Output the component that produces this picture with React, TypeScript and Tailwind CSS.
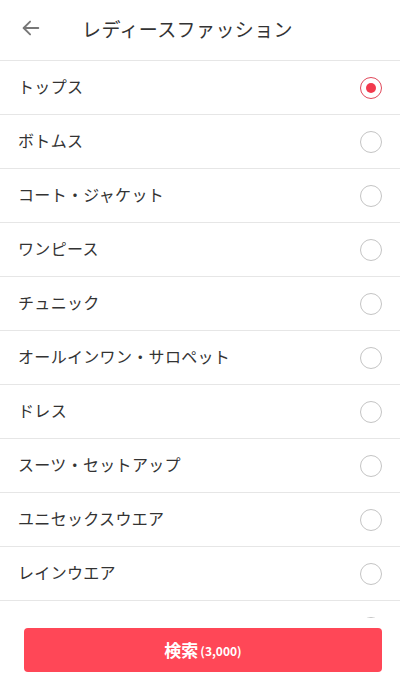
import React from "react";

const categories = [
  "トップス",
  "ボトムス",
  "コート・ジャケット",
  "ワンピース",
  "チュニック",
  "オールインワン・サロペット",
  "ドレス",
  "スーツ・セットアップ",
  "ユニセックスウエア",
  "レインウエア",
  "ルームウエア",
];

const Radio = ({ checked }: { checked: boolean }) =>
  checked ? (
    <span className="w-[22px] h-[22px] rounded-full border-[1.5px] border-[#e0485a] flex items-center justify-center">
      <span className="w-[10px] h-[10px] rounded-full bg-[#f23a4d]" />
    </span>
  ) : (
    <span className="w-[22px] h-[22px] rounded-full border-[1.5px] border-[#c4c4c4]" />
  );

export default function App() {
  const selected = 0;
  return (
    <div
      className="relative h-[682px] w-[400px] overflow-hidden bg-white text-[#333]"
      style={{ fontFamily: '"Noto Sans CJK JP", "Noto Sans", sans-serif' }}
    >
      <div className="h-[61px] pb-[4px] flex items-center border-b border-[#e6e6e6]">
        <button className="w-[62px] h-full flex items-center justify-center text-[#777]">
          <svg width="22" height="22" viewBox="0 0 24 24" fill="none" stroke="currentColor" strokeWidth="2" strokeLinecap="round" strokeLinejoin="round">
            <path d="M20 12H4" />
            <path d="M11 5l-7 7 7 7" />
          </svg>
        </button>
        <h1 className="ml-[20px] text-[19px] leading-none tracking-[0.02em] text-[#333]">
          レディースファッション
        </h1>
      </div>
      <ul>
        {categories.map((name, i) => (
          <li
            key={name}
            className="h-[54px] flex items-center justify-between pl-[18px] pr-[18px] border-b border-[#e6e6e6]"
          >
            <span className="text-[16px] leading-none pb-[3px] tracking-[0.02em]">{name}</span>
            <Radio checked={i === selected} />
          </li>
        ))}
      </ul>
      <div className="absolute bottom-0 left-0 right-0 h-[64px] bg-white px-[24px] pt-[10px]">
        <button className="w-[358px] h-[44px] rounded-[4px] bg-[#ff4757] text-white font-bold flex items-center justify-center">
          <span className="text-[17px]">検索</span>
          <span className="text-[12px] ml-[2px] mt-[2px]">(3,000)</span>
        </button>
      </div>
    </div>
  );
}
